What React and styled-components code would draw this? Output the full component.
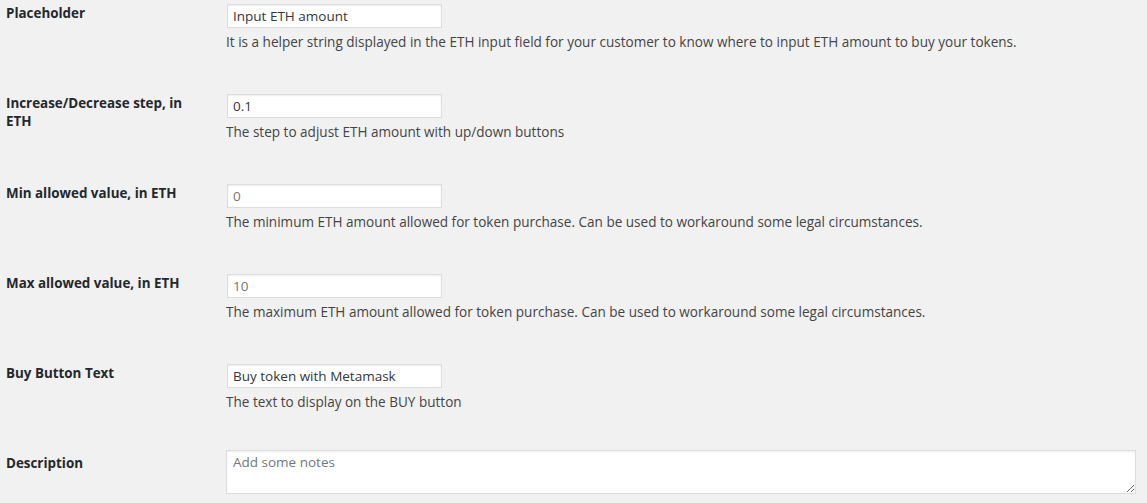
import React from 'react';
import styled, { createGlobalStyle } from 'styled-components';

const GlobalStyle = createGlobalStyle`
  html, body {
    margin: 0;
    padding: 0;
    background: #f1f1f1;
  }
  body {
    font-family: "Open Sans", "Noto Sans", sans-serif;
    color: #23282d;
  }
`;

const fields = [
  {
    label: 'Placeholder',
    value: 'Input ETH amount',
    help: 'It is a helper string displayed in the ETH input field for your customer to know where to input ETH amount to buy your tokens.'
  },
  {
    label: 'Increase/Decrease step, in ETH',
    value: '0.1',
    help: 'The step to adjust ETH amount with up/down buttons'
  },
  {
    label: 'Min allowed value, in ETH',
    placeholder: '0',
    help: 'The minimum ETH amount allowed for token purchase. Can be used to workaround some legal circumstances.'
  },
  {
    label: 'Max allowed value, in ETH',
    placeholder: '10',
    help: 'The maximum ETH amount allowed for token purchase. Can be used to workaround some legal circumstances.'
  },
  {
    label: 'Buy Button Text',
    value: 'Buy token with Metamask',
    help: 'The text to display on the BUY button'
  }
];

const App = () => {
  return (
    <>
      <GlobalStyle />
      <FormTable>
        {fields.map((f) => (
          <Row key={f.label}>
            <LabelCell>{f.label}</LabelCell>
            <FieldCell>
              <TextInput
                type="text"
                defaultValue={f.value}
                placeholder={f.placeholder}
              />
              <Description>{f.help}</Description>
            </FieldCell>
          </Row>
        ))}
        <Row $last>
          <LabelCell>Description</LabelCell>
          <FieldCell>
            <TextArea placeholder="Add some notes" />
          </FieldCell>
        </Row>
      </FormTable>
    </>
  );
};

const FormTable = styled.div`
  display: flex;
  flex-direction: column;
  width: 1147px;
`;

const Row = styled.div`
  display: flex;
  align-items: flex-start;
  height: ${(p) => (p.$last ? '53px' : '90px')};
`;

const LabelCell = styled.div`
  width: 200px;
  padding: 4px 20px 0 6px;
  font-size: 13.4px;
  line-height: 18px;
  font-weight: 700;
  flex-shrink: 0;
`;

const FieldCell = styled.div`
  flex: 1;
  padding-right: 11px;
  display: flex;
  flex-direction: column;
`;

const TextInput = styled.input`
  box-sizing: border-box;
  width: 215px;
  height: 24px;
  margin: 4px 0 0 1px;
  padding: 0 5px;
  border: 1px solid #ddd;
  border-radius: 0;
  background: #fff;
  box-shadow: inset 0 1px 2px rgba(0, 0, 0, 0.07);
  font-family: inherit;
  font-size: 13.5px;
  color: #32373c;
  outline: none;

  &::placeholder {
    color: #72777c;
  }
`;

const Description = styled.p`
  margin: 5px 0 0;
  font-size: 13.55px;
  line-height: 18px;
  color: #444;
`;

const TextArea = styled.textarea`
  box-sizing: border-box;
  width: 100%;
  height: 44px;
  margin: 0;
  padding: 2px 6px;
  border: 1px solid #ddd;
  border-radius: 0;
  background: #fff;
  box-shadow: inset 0 1px 2px rgba(0, 0, 0, 0.07);
  font-family: inherit;
  font-size: 13.5px;
  line-height: 18px;
  color: #32373c;
  outline: none;

  &::placeholder {
    color: #72777c;
  }
`;

export default App;
